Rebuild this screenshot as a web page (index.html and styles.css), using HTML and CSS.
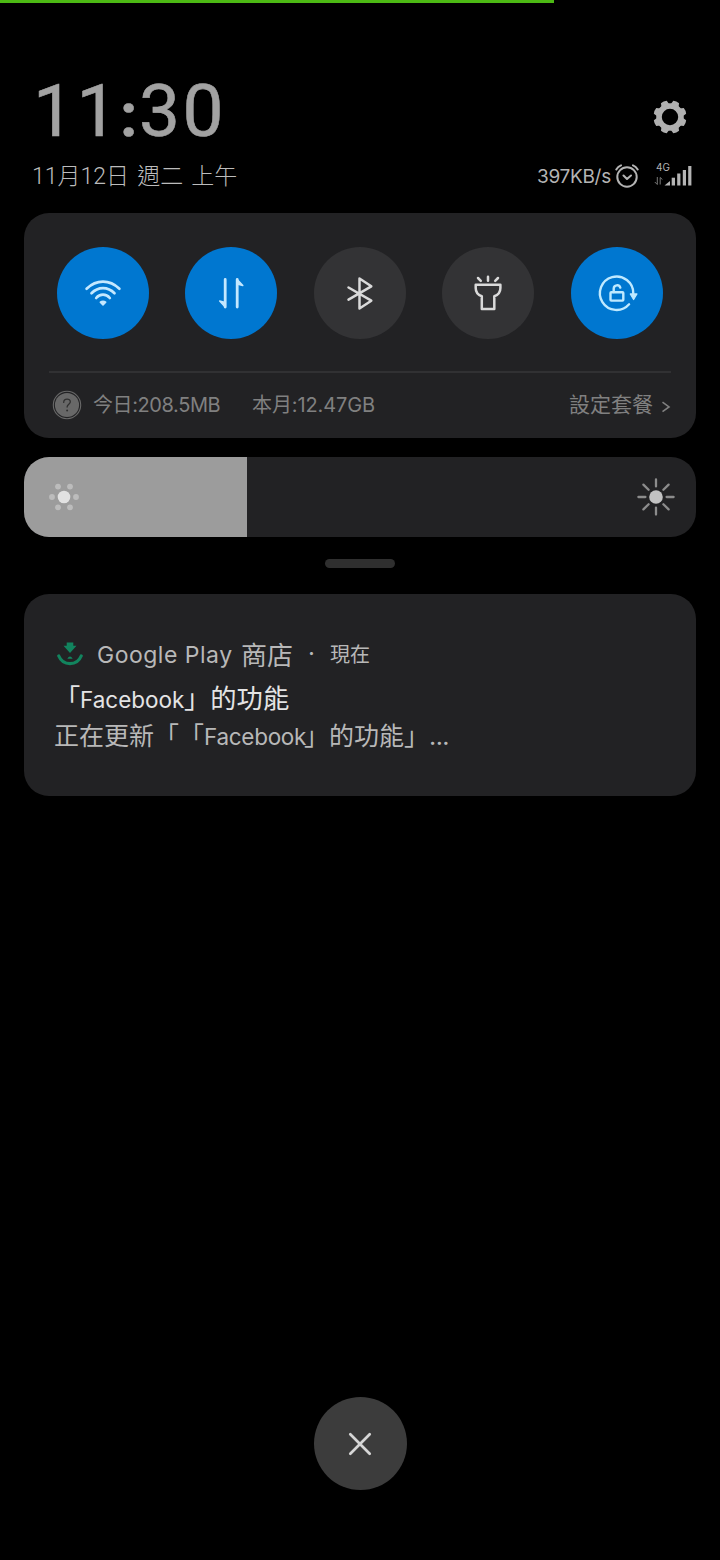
FILE: index.html
```html
<!DOCTYPE html>
<html lang="zh-Hant">
<head>
<meta charset="utf-8">
<title>通知</title>
<link rel="stylesheet" href="styles.css">
</head>
<body>
<div class="screen">
  <div class="progress"></div>
  <header class="header">
    <div class="clock-row">
      <div class="clock">11<b>:</b>30</div>
      <svg class="gear" width="34" height="34" viewBox="-17 -17 34 34">
        <g fill="#b0b0b0">
          <path fill-rule="evenodd" d="M0-13.8A13.8 13.8 0 1 1 0 13.8A13.8 13.8 0 1 1 0-13.8ZM0-8.2A8.2 8.2 0 1 0 0 8.2A8.2 8.2 0 1 0 0-8.2Z"/>
          <g transform="rotate(22.5)">
            <path id="tooth" d="M-4.2-12L-3.1-16.2Q0-17.2 3.1-16.2L4.2-12Z"/>
            <use href="#tooth" transform="rotate(45)"/><use href="#tooth" transform="rotate(90)"/><use href="#tooth" transform="rotate(135)"/><use href="#tooth" transform="rotate(180)"/><use href="#tooth" transform="rotate(225)"/><use href="#tooth" transform="rotate(270)"/><use href="#tooth" transform="rotate(315)"/>
          </g>
        </g>
      </svg>
    </div>
    <div class="date-row">
      <div class="date">11月12日 週二 上午</div>
      <div class="status">
        <span class="speed">397KB/s</span>
        <svg class="alarm" width="24" height="26" viewBox="0 0 24 26" fill="none" stroke="#b4b4b4" stroke-width="2" stroke-linecap="round" stroke-linejoin="round">
          <circle cx="12" cy="14" r="9.7"/><path d="M8.5 12.5L12 16L16 12.5M1.3 6.5Q3 3.5 6 2.4M22.7 6.5Q21 3.5 18 2.4"/>
        </svg>
        <div class="cell">
          <span class="net">4G</span>
          <svg width="38" height="20" viewBox="0 0 38 20">
            <g fill="#b4b4b4"><path d="M10.5 19.5L16 15V19.5Z"/><rect x="17.7" y="11.7" width="3.3" height="7.8"/><rect x="23.2" y="7.5" width="3.2" height="12"/><rect x="28.8" y="4" width="3.2" height="15.5"/><rect x="34.2" y="0" width="3.2" height="19.5"/></g>
            <path d="M3.3 11V18.5L.8 16M6.2 18.5V11.5L8.4 13.5" fill="none" stroke="#777" stroke-width="1"/>
          </svg>
        </div>
      </div>
    </div>
  </header>

  <section class="panel">
    <div class="toggles">
      <div class="toggle on">
        <svg width="46" height="46" viewBox="-23 -23 46 46" fill="none" stroke="#c4e8ff" stroke-width="2.7" stroke-linecap="round">
          <path d="M-16.4-4.2Q-9-11.3 0-11.3T16.4-4.2M-11.5.3Q-6.5-4.8 0-4.8T11.5.3M-6.8 5Q-4 1.7 0 1.7T6.8 5"/><path d="M-2.7 9.2Q0 7.2 2.7 9.2L0 12Z" fill="#c4e8ff" stroke-width="1.5" stroke-linejoin="round"/>
        </svg>
      </div>
      <div class="toggle on">
        <svg width="46" height="46" viewBox="-23 -23 46 46" fill="#c4e8ff" stroke="#c4e8ff" stroke-width="2.8" stroke-linecap="round" stroke-linejoin="round">
          <path d="M-5.8-13.5V14M6.2 14V-13.5" fill="none"/><path d="M-5.8 14L-11.3 8L-5.8 9.5ZM6.2-13.5L11.8-7.5L6.2-9Z" stroke-width="1.5"/>
        </svg>
      </div>
      <div class="toggle">
        <svg width="46" height="46" viewBox="-23 -23 46 46" fill="none" stroke="#dadada" stroke-width="2.5" stroke-linecap="round" stroke-linejoin="round">
          <path d="M-11.5-5.5L11.3 7.7L-.5 15.5V-14.5L11.3-6.7L-11.5 6.7"/>
        </svg>
      </div>
      <div class="toggle">
        <svg width="46" height="46" viewBox="-23 -23 46 46" fill="none" stroke="#dadada" stroke-width="2.5" stroke-linecap="round" stroke-linejoin="round">
          <path d="M-12.3-8.2H12.4V-5Q12.4 1.2 6.3 3.2V15.9H-6.2V3.2Q-12.3 1.2-12.3-5ZM0-16.2V-12.3M-10-15L-7.2-12.2M10-15L7.2-12.2"/>
        </svg>
      </div>
      <div class="toggle on">
        <svg width="46" height="46" viewBox="-23 -23 46 46" fill="none" stroke="#bfe9ff" stroke-width="2.4" stroke-linecap="round" stroke-linejoin="round">
          <path d="M12.1 11.3A16.7 16.7 0 1 1 16.3 .5"/><path d="M13.3 1H19.9L16.6 6.5Z" fill="#bfe9ff" stroke-width="1.3"/><rect x="-6.5" y="-.8" width="12.8" height="8.4" rx=".8"/><path d="M-3.3-1V-4.5A3.4 3.4 0 0 1 3.3-5.4"/>
        </svg>
      </div>
    </div>
    <div class="usage">
      <svg class="help" width="30" height="30" viewBox="0 0 30 30"><circle cx="15" cy="15" r="13.7" fill="none" stroke="#686868" stroke-width="1.1"/><circle cx="15" cy="15" r="12.1" fill="#686868"/><path d="M11.7 12.4C11.7 8 18.6 8.2 18.3 12C18.1 14.2 15.2 14.3 15.1 17" fill="none" stroke="#303030" stroke-width="1.3" stroke-linecap="round"/><circle cx="15.1" cy="20.4" r="1" fill="#303030"/></svg>
      <span class="today">今日:208.5MB</span>
      <span class="month">本月:12.47GB</span>
      <span class="plan">設定套餐</span>
      <svg class="chevron" width="10" height="12" viewBox="0 0 10 12"><path d="M1.5 1.2L8 5.9L1.5 10.6" fill="none" stroke="#808080" stroke-width="1.6"/></svg>
    </div>
  </section>

  <section class="brightness">
    <div class="level">
      <svg width="32" height="32" viewBox="-16 -16 32 32"><circle r="6.3" fill="#e2e2e2"/><g fill="#bcbcbc"><circle cx="-12" r="2.9"/><circle cx="12" r="2.9"/><circle cx="-6" cy="-10.4" r="2.9"/><circle cx="6" cy="-10.4" r="2.9"/><circle cx="-6" cy="10.4" r="2.9"/><circle cx="6" cy="10.4" r="2.9"/></g></svg>
    </div>
    <svg class="sun" width="40" height="40" viewBox="-20 -20 40 40"><circle r="6.8" fill="#c2c2c2"/><path d="M0-17.6V-10.6M0 17.6V10.6M-17.6 0H-10.6M17.6 0H10.6M-12.6-12.4L-7.4-7.2M12.6-12.4L7.4-7.2M-12.6 12.4L-7.4 7.2M12.6 12.4L7.4 7.2" stroke="#8c8c8c" stroke-width="2.3" stroke-linecap="round"/></svg>
  </section>
  <div class="handle"></div>

  <section class="notice">
    <div class="app">
      <svg width="26" height="26" viewBox="0 0 26 26"><path d="M1.8 15C6 25.2 20 25.2 24.2 15" fill="none" stroke="#12845e" stroke-width="3.2" stroke-linecap="round"/><path d="M9.7 1.5H16.3V4.8H19.5L13 12L6.5 4.8H9.7Z" fill="#12845e"/><path d="M10.3 17.8Q13 13.2 15.7 17.8Z" fill="#12845e"/></svg>
      <span class="name">Google Play</span><span class="store">商店</span><span class="dot">·</span><span class="when">現在</span>
    </div>
    <div class="title"><span>「</span><span class="fb">Facebook</span><span>」的功能</span></div>
    <div class="body"><span>正在更新「「</span><span class="fb">Facebook</span><span>」的功能」</span><span class="more">...</span></div>
  </section>

  <div class="close">
    <svg width="24" height="24" viewBox="0 0 24 24"><path d="M2.3 2.3L21.7 21.7M21.7 2.3L2.3 21.7" stroke="#d6d6d6" stroke-width="2.7" stroke-linecap="round"/></svg>
  </div>
</div>
</body>
</html>
```
FILE: styles.css
```css
* { box-sizing: border-box; }
body { margin: 0; background: #000; font-family: Inter, "Noto Sans CJK TC", sans-serif; text-spacing-trim: space-all; }
svg { display: block; flex: none; }
.screen { width: 720px; height: 1560px; display: flex; flex-direction: column; background: #000; overflow: hidden; white-space: nowrap; }
.progress { flex: none; width: 554px; height: 3px; background: #4cb914; }
.header { height: 210px; padding: 67px 28px 0 31px; }
.clock-row { display: flex; justify-content: space-between; height: 80px; padding-right: 5px; }
.clock { display: flex; align-items: baseline; margin-left: 2px; font-family: Roboto, sans-serif; font-size: 73px; line-height: 82px; letter-spacing: 2.5px; color: #a2a2a2; -webkit-text-stroke: .6px #a2a2a2; }
.clock b { width: 19px; font-size: 62px; letter-spacing: 0; }
.gear { margin-top: 30px; }
.date-row { display: flex; justify-content: space-between; height: 40px; margin-top: 6px; }
.date { margin-left: 1px; font-family: Roboto, "Noto Sans CJK TC", sans-serif; font-size: 23px; line-height: 42px; font-weight: 300; color: #bcbcbc; word-spacing: 2.5px; }
.status { display: flex; color: #b4b4b4; }
.speed { width: 76px; font-size: 19px; line-height: 42px; letter-spacing: -.3px; }
.alarm { margin: 7px 0 0 2px; }
.cell { display: flex; flex-direction: column; margin: 6px 0 0 15px; }
.net { font: 10px/10px Inter, sans-serif; margin-left: 2px; height: 4px; }
.panel { margin: 0 24px; height: 225px; border-radius: 25px; background: #222224; flex: none; padding: 34px 25px 0; }
.toggles { display: flex; justify-content: space-between; padding: 0 8.5px 32px 8px; border-bottom: 2px solid #313133; }
.toggle { width: 92px; height: 92px; border-radius: 50%; background: #333335; display: flex; align-items: center; justify-content: center; }
.toggle.on { background: #0077d0; }
.usage { display: flex; align-items: center; height: 63px; padding-left: 3px; font-size: 21px; line-height: 30px; color: #808080; }
.today, .month { font-size: 20px; letter-spacing: -.4px; }
.today { margin-left: 11px; width: 159px; }
.month { flex: 1; letter-spacing: -.1px; }
.chevron { margin: 4px 0 0 8px; }
.brightness { flex: none; margin: 19px 24px 0; height: 80px; border-radius: 25px; background: #222224; display: flex; align-items: center; justify-content: space-between; padding-right: 20px; overflow: hidden; }
.level { width: 223px; height: 80px; background: #9c9c9c; display: flex; align-items: center; padding-left: 24px; }
.handle { flex: none; width: 70px; height: 9px; border-radius: 5px; background: #2f2f2f; margin: 22px auto 0; }
.notice { flex: none; height: 202px; margin: 26px 24px 0; border-radius: 25px; background: #222224; padding: 41px 30px 0; color: #b8b8b8; }
.app { display: flex; align-items: center; height: 37px; padding-left: 3px; font-size: 24px; }
.name { width: 144px; margin-left: 14px; font-size: 23px; line-height: 30px; padding-top: 3px; letter-spacing: .5px; }
.store { font-size: 26px; }
.dot { width: 37px; text-align: center; }
.when { font-size: 20px; }
.title, .body { display: flex; align-items: baseline; font-size: 25px; }
.fb { font-size: 22.5px; letter-spacing: -.3px; }
.title { height: 37px; line-height: 54px; font-size: 26.3px; color: #e4e4e4; }
.title .fb { width: 104px; letter-spacing: 0; }
.title span:first-child { width: 26px; }
.body { height: 38px; line-height: 54px; }
.body .fb { width: 100px; }
.more { letter-spacing: -.6px; }
.close { flex: none; width: 93px; height: 93px; border-radius: 50%; background: #3c3c3c; margin: 601px auto 0; display: flex; align-items: center; justify-content: center; }
```
